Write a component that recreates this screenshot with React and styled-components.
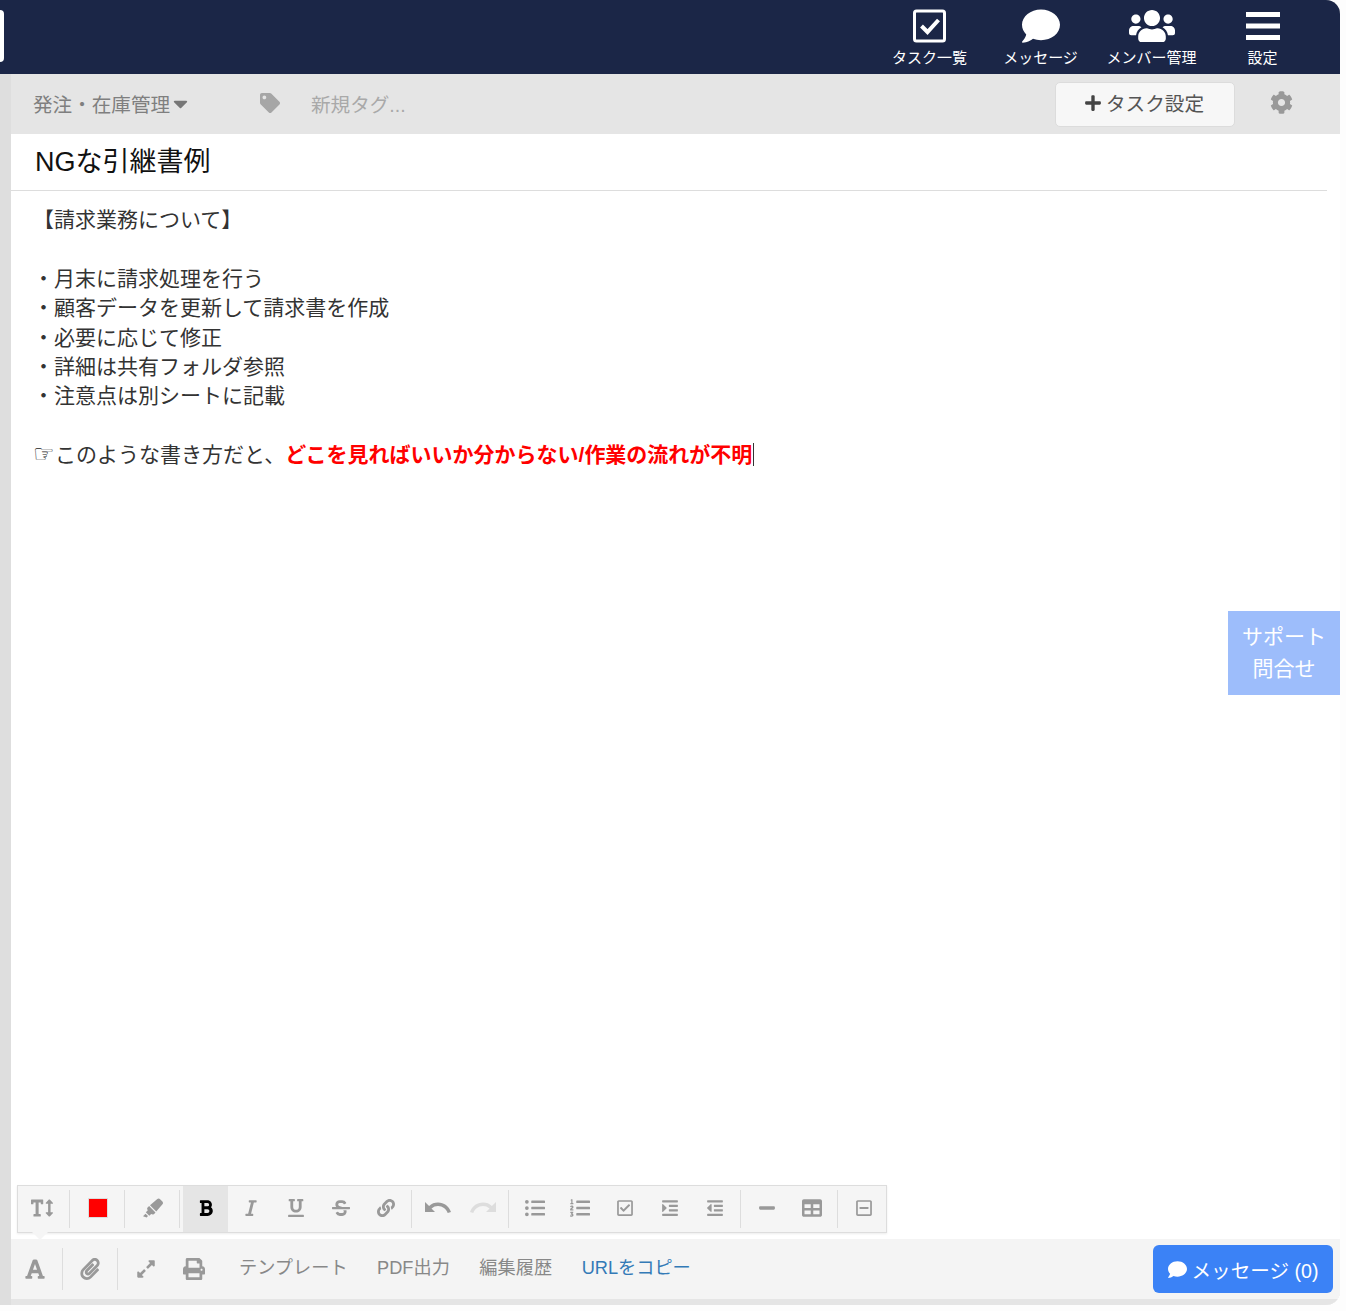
import React from "react"
import styled, { createGlobalStyle } from "styled-components"
import {
  FaBold, FaCaretDown, FaCog, FaComment, FaExpandAlt, FaFont, FaHighlighter, FaIndent, FaItalic,
  FaLink, FaListOl, FaListUl, FaMinus, FaOutdent, FaPaperclip, FaPlus, FaPrint, FaRegCheckSquare,
  FaRegMinusSquare, FaStrikethrough, FaTable, FaTag, FaTextHeight, FaUnderline, FaUsers,
} from "react-icons/fa"

const GlobalStyle = createGlobalStyle`
  html, body {
    margin: 0;
    background: #fdfdfd;
  }
  body {
    font-family: "Liberation Sans", "Noto Sans CJK JP", sans-serif;
    color: #333;
  }
`

const Page = styled.div`
  width: 1340px;
  height: 1305px;
  display: flex;
  flex-direction: column;
  position: relative;
  overflow: hidden;
  border-radius: 0 14px 14px 0;
  background: #e5e5e5;
`

const Header = styled.header`
  height: 74px;
  flex: none;
  background: #1b2647;
  display: flex;
  align-items: flex-start;
  justify-content: space-between;
  padding-right: 22px;
`

const LogoEdge = styled.div`
  width: 4px;
  height: 52px;
  margin-top: 10px;
  background: #fff;
  border-radius: 0 5px 5px 0;
`

const Nav = styled.nav`
  display: flex;
`

const NavItem = styled.a`
  width: 111px;
  height: 74px;
  display: flex;
  flex-direction: column;
  align-items: center;
  color: #fff;
  font-size: 15px;
  line-height: 20px;
  white-space: nowrap;
`

const NavIcon = styled.div`
  height: 38px;
  margin-top: 7px;
  margin-bottom: 3px;
  display: flex;
  align-items: center;
  justify-content: center;
  font-size: ${(p) => p.$size || 34}px;
`

const Body = styled.div`
  flex: 1;
  min-height: 0;
  display: flex;
  background: #dedede;
  padding-left: 11px;
`

const Main = styled.main`
  flex: 1;
  min-width: 0;
  display: flex;
  flex-direction: column;
  background: #fff;
  position: relative;
`

const TaskBar = styled.div`
  height: 60px;
  flex: none;
  background: #e5e5e5;
  display: flex;
  align-items: center;
  padding: 0 13px 0 22px;
  font-size: 19.6px;
`

const Category = styled.div`
  width: 227px;
  display: flex;
  align-items: center;
  margin-top: -2px;
  color: #7f7f7f;
  svg {
    margin-left: -1px;
    font-size: 23px;
    color: #777;
  }
`

const TagField = styled.div`
  flex: 1;
  display: flex;
  align-items: center;
  margin-top: -2px;
  color: #a9a9a9;
  svg {
    font-size: 20px;
    margin-right: 31px;
    color: #a6a6a6;
  }
`

const TaskButton = styled.button`
  width: 180px;
  height: 45px;
  box-sizing: border-box;
  margin-top: 0;
  padding: 0 2px 3px 0;
  display: flex;
  align-items: center;
  justify-content: center;
  gap: 4px;
  background: #f7f7f7;
  border: 1px solid #dcdcdc;
  border-radius: 5px;
  color: #555;
  font: inherit;
  font-size: 19.6px;
  svg {
    color: #444;
    font-size: 18px;
  }
`

const GearButton = styled.div`
  width: 92px;
  margin-top: -4px;
  display: flex;
  justify-content: center;
  color: #999;
  font-size: 23px;
`

const Title = styled.h1`
  margin: 0 13px 0 0;
  height: 57px;
  flex: none;
  box-sizing: border-box;
  border-bottom: 1px solid #ddd;
  padding: 10px 0 0 24px;
  font-size: 27px;
  line-height: 36px;
  font-weight: 400;
  color: #111;
`

const Editor = styled.div`
  flex: 1;
  padding: 14px 0 0 22px;
  font-size: 21px;
  line-height: 29.4px;
  color: #333;
`

const Line = styled.div`
  min-height: 29.4px;
  white-space: pre;
`

const Pointer = styled.span`
  font-family: "DejaVu Sans", sans-serif;
  display: inline-block;
  width: 22px;
  font-size: 24px;
  line-height: 20px;
  color: #222;
`

const Warning = styled.strong`
  color: #f00;
  font-weight: 700;
  border-right: 1px solid #333;
  padding-right: 1px;
`

const SupportTab = styled.a`
  position: absolute;
  right: 0;
  top: 537px;
  width: 112px;
  height: 84px;
  display: flex;
  flex-direction: column;
  justify-content: center;
  align-items: center;
  background: #9dbdfb;
  color: #fff;
  font-size: 21px;
  line-height: 32px;
`

const Toolbar = styled.div`
  position: absolute;
  left: 6px;
  top: 1111px;
  height: 48px;
  box-sizing: border-box;
  display: flex;
  align-items: stretch;
  background: #f5f5f5;
  border: 1px solid #ddd;
  box-shadow: 0 1px 2px rgba(0, 0, 0, 0.08);
  &::after {
    content: "";
    position: absolute;
    left: 14px;
    bottom: -8px;
    width: 0;
    height: 0;
    border-left: 8px solid transparent;
    border-right: 8px solid transparent;
    border-top: 8px solid #f5f5f5;
  }
`

const ToolGroup = styled.div`
  display: flex;
  align-items: stretch;
  padding: 0 ${(p) => p.$pad ?? 4}px 0 ${(p) => p.$padLeft ?? 3}px;
  position: relative;
  &:not(:last-child)::after {
    content: "";
    position: absolute;
    right: 0;
    top: 4px;
    bottom: 4px;
    width: 1px;
    background: #ddd;
  }
`

const Tool = styled.div`
  width: ${(p) => p.$w || 45}px;
  box-sizing: border-box;
  padding-bottom: 2px;
  padding-right: ${(p) => p.$shift || 0}px;
  display: flex;
  align-items: center;
  justify-content: center;
  color: ${(p) => (p.$dim ? "#ddd" : "#999")};
  font-size: ${(p) => p.$size || 18}px;
  ${(p) => p.$active && "background: #e5e5e5; color: #000;"}
`

const Swatch = styled.div`
  width: 20px;
  height: 20px;
  background: #f00;
  box-sizing: border-box;
  border: 1px solid #ddd;
`

const Footer = styled.footer`
  height: 66px;
  flex: none;
  box-sizing: border-box;
  background: #f4f4f4;
  border-bottom: 6px solid #e5e5e5;
  display: flex;
  align-items: center;
  padding-right: 7px;
  font-size: 18.2px;
`

const FooterGroup = styled.div`
  height: 42px;
  width: ${(p) => p.$w}px;
  box-sizing: border-box;
  flex: none;
  padding-right: ${(p) => p.$shift || 0}px;
  display: flex;
  align-items: center;
  justify-content: center;
  border-right: ${(p) => (p.$plain ? "none" : "1px solid #ddd")};
  color: #999;
  font-size: ${(p) => p.$size || 22}px;
`

const FooterLink = styled.a`
  margin-right: 29.5px;
  color: ${(p) => (p.$blue ? "#337ab7" : "#888")};
  position: relative;
  top: -3px;
  white-space: nowrap;
  &:first-of-type {
    margin-left: 25px;
  }
`

const MessageButton = styled.button`
  margin-left: auto;
  width: 180px;
  height: 48px;
  display: flex;
  align-items: center;
  justify-content: center;
  gap: 5px;
  background: #3b82f6;
  color: #fff;
  border: none;
  border-radius: 6px;
  font: inherit;
  font-size: 19.6px;
  svg {
    font-size: 19px;
  }
`

const CheckIcon = () => (
  <svg width="34" height="34" viewBox="0 0 34 34">
    <rect x="1.500" y="2" width="30" height="30" rx="2" fill="none" stroke="#fff" strokeWidth="3" />
    <path d="M8.500 17l6 6 11-12" fill="none" stroke="#fff" strokeWidth="4" />
  </svg>
)

const BarsIcon = () => (
  <svg width="34" height="30" viewBox="0 0 34 30">
    <path d="M0 1h34v5H0zM0 12.500h34v5H0zM0 24h34v5H0z" fill="#fff" />
  </svg>
)

// curved arrow used for undo, mirrored for redo
const UndoIcon = ({ flip }) => (
  <svg width="26" height="16" viewBox="0 0 26 16" style={flip ? { transform: "scaleX(-1)" } : undefined}>
    <path d="M0 2v10h10l-3.500-3.500C8.500 6.800 10.600 6 13 6c4.500 0 8.300 2.900 9.700 7l3.300-1.100C24 6.300 19 2.500 13 2.500c-3.400 0-6.500 1.200-8.900 3.400L0 2z" fill="currentColor" />
  </svg>
)

const navItems = [
  { label: "タスク一覧", icon: <CheckIcon /> },
  { label: "メッセージ", icon: <FaComment />, size: 38 },
  { label: "メンバー管理", icon: <FaUsers />, size: 46 },
  { label: "設定", icon: <BarsIcon /> },
]

const lines = [
  "【請求業務について】",
  "",
  "・月末に請求処理を行う",
  "・顧客データを更新して請求書を作成",
  "・必要に応じて修正",
  "・詳細は共有フォルダ参照",
  "・注意点は別シートに記載",
  "",
]

function App() {
  return (
    <Page>
      <GlobalStyle />
      <Header>
        <LogoEdge />
        <Nav>
          {navItems.map((item) => (
            <NavItem key={item.label}>
              <NavIcon $size={item.size}>{item.icon}</NavIcon>
              {item.label}
            </NavItem>
          ))}
        </Nav>
      </Header>
      <Body>
        <Main>
          <TaskBar>
            <Category>
              発注・在庫管理
              <FaCaretDown />
            </Category>
            <TagField>
              <FaTag />
              新規タグ...
            </TagField>
            <TaskButton>
              <FaPlus />
              タスク設定
            </TaskButton>
            <GearButton>
              <FaCog />
            </GearButton>
          </TaskBar>
          <Title>NGな引継書例</Title>
          <Editor>
            {lines.map((line, i) => (
              <Line key={i}>{line}</Line>
            ))}
            <Line>
              <Pointer>☞</Pointer>
              このような書き方だと、
              <Warning>どこを見ればいいか分からない/作業の流れが不明</Warning>
            </Line>
          </Editor>
          <SupportTab>
            <span>サポート</span>
            <span>問合せ</span>
          </SupportTab>
          <Toolbar>
            <ToolGroup $padLeft={0} $pad={1}>
              <Tool $w={51} $size={22} $shift={4}>
                <FaTextHeight />
              </Tool>
            </ToolGroup>
            <ToolGroup $padLeft={0} $pad={0}>
              <Tool $w={55}>
                <Swatch />
              </Tool>
            </ToolGroup>
            <ToolGroup $padLeft={0} $pad={0}>
              <Tool $w={55} $size={20}>
                <FaHighlighter />
              </Tool>
            </ToolGroup>
            <ToolGroup>
              <Tool $active>
                <FaBold />
              </Tool>
              <Tool>
                <FaItalic />
              </Tool>
              <Tool>
                <FaUnderline />
              </Tool>
              <Tool>
                <FaStrikethrough />
              </Tool>
              <Tool>
                <FaLink />
              </Tool>
            </ToolGroup>
            <ToolGroup>
              <Tool>
                <UndoIcon />
              </Tool>
              <Tool $dim>
                <UndoIcon flip />
              </Tool>
            </ToolGroup>
            <ToolGroup>
              <Tool $size={20}>
                <FaListUl />
              </Tool>
              <Tool $size={20}>
                <FaListOl />
              </Tool>
              <Tool>
                <FaRegCheckSquare />
              </Tool>
              <Tool>
                <FaIndent />
              </Tool>
              <Tool>
                <FaOutdent />
              </Tool>
            </ToolGroup>
            <ToolGroup>
              <Tool>
                <FaMinus />
              </Tool>
              <Tool $size={20}>
                <FaTable />
              </Tool>
            </ToolGroup>
            <ToolGroup $pad={0}>
              <Tool>
                <FaRegMinusSquare />
              </Tool>
            </ToolGroup>
          </Toolbar>
          <Footer>
            <FooterGroup $w={52} $shift={4}>
              <FaFont />
            </FooterGroup>
            <FooterGroup $w={55}>
              <FaPaperclip />
            </FooterGroup>
            <FooterGroup $w={55} $plain $size={20}>
              <FaExpandAlt />
            </FooterGroup>
            <FooterGroup $w={41} $plain>
              <FaPrint />
            </FooterGroup>
            <FooterLink>テンプレート</FooterLink>
            <FooterLink>PDF出力</FooterLink>
            <FooterLink>編集履歴</FooterLink>
            <FooterLink $blue>URLをコピー</FooterLink>
            <MessageButton>
              <FaComment />
              メッセージ (0)
            </MessageButton>
          </Footer>
        </Main>
      </Body>
    </Page>
  )
}

export default App
